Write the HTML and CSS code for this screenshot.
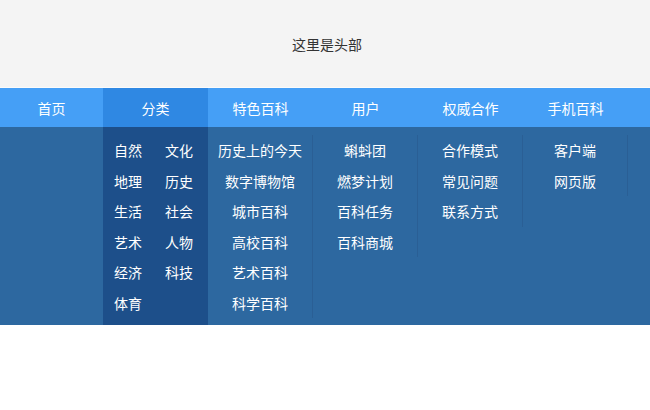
FILE: index.html
```html
<!DOCTYPE html>
<html lang="zh-CN">
<head>
<meta charset="utf-8">
<title>百科导航</title>
<link rel="stylesheet" href="styles.css">
</head>
<body>
<header class="header">这里是头部</header>
<nav class="nav">
  <div class="nav-item">首页</div>
  <div class="nav-item active">分类</div>
  <div class="nav-item">特色百科</div>
  <div class="nav-item">用户</div>
  <div class="nav-item">权威合作</div>
  <div class="nav-item">手机百科</div>
  <div class="nav-fill"></div>
</nav>
<section class="drop">
  <div class="col"></div>
  <div class="col cat">
    <ul class="cat-list">
      <li>自然</li><li>文化</li>
      <li>地理</li><li>历史</li>
      <li>生活</li><li>社会</li>
      <li>艺术</li><li>人物</li>
      <li>经济</li><li>科技</li>
      <li>体育</li>
    </ul>
  </div>
  <div class="col">
    <ul class="list">
      <li>历史上的今天</li>
      <li>数字博物馆</li>
      <li>城市百科</li>
      <li>高校百科</li>
      <li>艺术百科</li>
      <li>科学百科</li>
    </ul>
  </div>
  <div class="col">
    <ul class="list">
      <li>蝌蚪团</li>
      <li>燃梦计划</li>
      <li>百科任务</li>
      <li>百科商城</li>
    </ul>
  </div>
  <div class="col">
    <ul class="list">
      <li>合作模式</li>
      <li>常见问题</li>
      <li>联系方式</li>
    </ul>
  </div>
  <div class="col">
    <ul class="list">
      <li>客户端</li>
      <li>网页版</li>
    </ul>
  </div>
  <div class="col"></div>
</section>
</body>
</html>
```
FILE: styles.css
```css
html, body {
  margin: 0;
  padding: 0;
  background: #fff;
  font-family: "Microsoft YaHei", "Noto Sans CJK SC", "Noto Sans", sans-serif;
  font-size: 14px;
}
ul {
  list-style: none;
  margin: 0;
  padding: 0;
}
.header {
  box-sizing: border-box;
  height: 88px;
  background: #f4f4f4;
  border-bottom: 1px solid #fbfbfb;
  color: #333;
  display: flex;
  justify-content: center;
  align-items: center;
  padding-left: 4px;
}
.nav {
  display: grid;
  grid-template-columns: 103px repeat(5, 105px) 1fr;
  height: 39px;
  background: #459ff6;
  color: #fff;
}
.nav-item {
  display: flex;
  align-items: center;
  justify-content: center;
}
.nav-item.active {
  background: #2f88e3;
}
.drop {
  display: grid;
  grid-template-columns: 103px repeat(5, 105px) 1fr;
  height: 198px;
  background: #2d68a0;
  color: #fff;
}
.col {
  padding-top: 8px;
}
.col.cat {
  background: #1d4f8a;
}
.cat-list {
  display: grid;
  grid-template-columns: 51px 1fr;
  padding-left: 11px;
}
.cat-list li,
.list li {
  line-height: 30.5px;
  height: 30.5px;
}
.list {
  text-align: center;
  border-right: 1px solid #2a5f95;
}
```
